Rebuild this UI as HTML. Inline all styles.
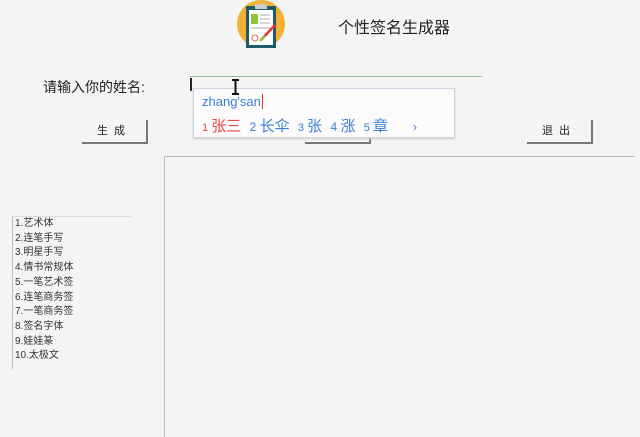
<html><head><style>
body{margin:0;width:640px;height:429px;background:#f4f4f4;position:relative;overflow:hidden;font-family:"Liberation Sans","Noto Sans CJK SC",sans-serif}
.a{position:absolute}
.btn{position:absolute;width:64px;height:22px;border-right:2px solid #777;border-bottom:2px solid #777;font-size:11px;text-align:center;line-height:22px;color:#222;letter-spacing:6px}
.list div{font-size:10px;line-height:14.7px;color:#333;padding-left:2px}
</style></head><body>
<svg class="a" style="left:235px;top:0" width="52" height="52"><circle cx="26" cy="24" r="24" fill="#f2b135"/><rect x="11" y="6" width="30" height="42" fill="#1f5a6a"/><rect x="14" y="10" width="24" height="35" fill="#fff"/><rect x="20" y="4" width="12" height="5" fill="#ccc"/><rect x="16" y="14" width="7" height="10" fill="#8cc63f"/><g stroke="#aaa" stroke-width="1"><line x1="25" y1="15" x2="35" y2="15"/><line x1="25" y1="19" x2="35" y2="19"/><line x1="25" y1="23" x2="35" y2="23"/><line x1="16" y1="28" x2="35" y2="28"/></g><circle cx="20" cy="38" r="3" fill="none" stroke="#e66"/><line x1="26" y1="40" x2="40" y2="25" stroke="#e33" stroke-width="2.5"/><line x1="25" y1="41" x2="30" y2="36" stroke="#8cc63f" stroke-width="2.5"/></svg>
<div class="a" style="left:338px;top:14px;font-size:16px;color:#222">个性签名生成器</div>
<div class="a" style="left:43px;top:77px;font-size:14px;color:#222">请输入你的姓名:</div>
<div class="a" style="left:190px;top:76px;width:292px;height:0;border-top:1px solid #9bb99b"></div>
<div class="a" style="left:190px;top:78px;width:2px;height:13px;background:#222"></div>
<div class="btn" style="left:82px;top:120px">生成</div>
<div class="btn" style="left:305px;top:120px"></div>
<div class="btn" style="left:527px;top:120px">退出</div>
<div class="a" style="left:193px;top:88px;width:260px;height:48px;background:#fbfbfb;border:1px solid #cdd8e4;box-shadow:0 1px 2px #ccc">
<div class="a" style="left:8px;top:5px;font-size:13px;color:#3b7fd0">zhang'san<span style="border-left:1px solid #e33;margin-left:1px"></span></div>
<div class="a" style="left:8px;top:26px;font-size:15px;color:#3b7fd0;white-space:nowrap"><span style="color:#e44"><small style="font-size:11px">1 </small>张三</span>&nbsp;&nbsp;<small style="font-size:12px">2 </small>长伞&nbsp;&nbsp;<small style="font-size:11px">3 </small>张&nbsp;&nbsp;<small style="font-size:12px">4 </small>涨&nbsp;&nbsp;<small style="font-size:11px">5 </small>章&nbsp;&nbsp;&nbsp;&nbsp;&nbsp;&nbsp;<small style="font-size:12px">›</small></div>
</div>
<svg class="a" style="left:231px;top:79px;z-index:5" width="9" height="16"><path d="M1 1H8M4.5 1V15M1 15H8" stroke="#111" stroke-width="2" fill="none"/></svg>
<div class="a" style="left:164px;top:156px;width:470px;height:280px;border-top:1px solid #bbb;border-left:1px solid #bbb"></div>
<div class="a list" style="left:12px;top:216px;width:118px;height:152px;border-left:1px solid #c8b8c8;border-top:1px solid #ddd">
<div>1.艺术体</div><div>2.连笔手写</div><div>3.明星手写</div><div>4.情书常规体</div><div>5.一笔艺术签</div><div>6.连笔商务签</div><div>7.一笔商务签</div><div>8.签名字体</div><div>9.娃娃篆</div><div>10.太极文</div>
</div>
</body></html>
